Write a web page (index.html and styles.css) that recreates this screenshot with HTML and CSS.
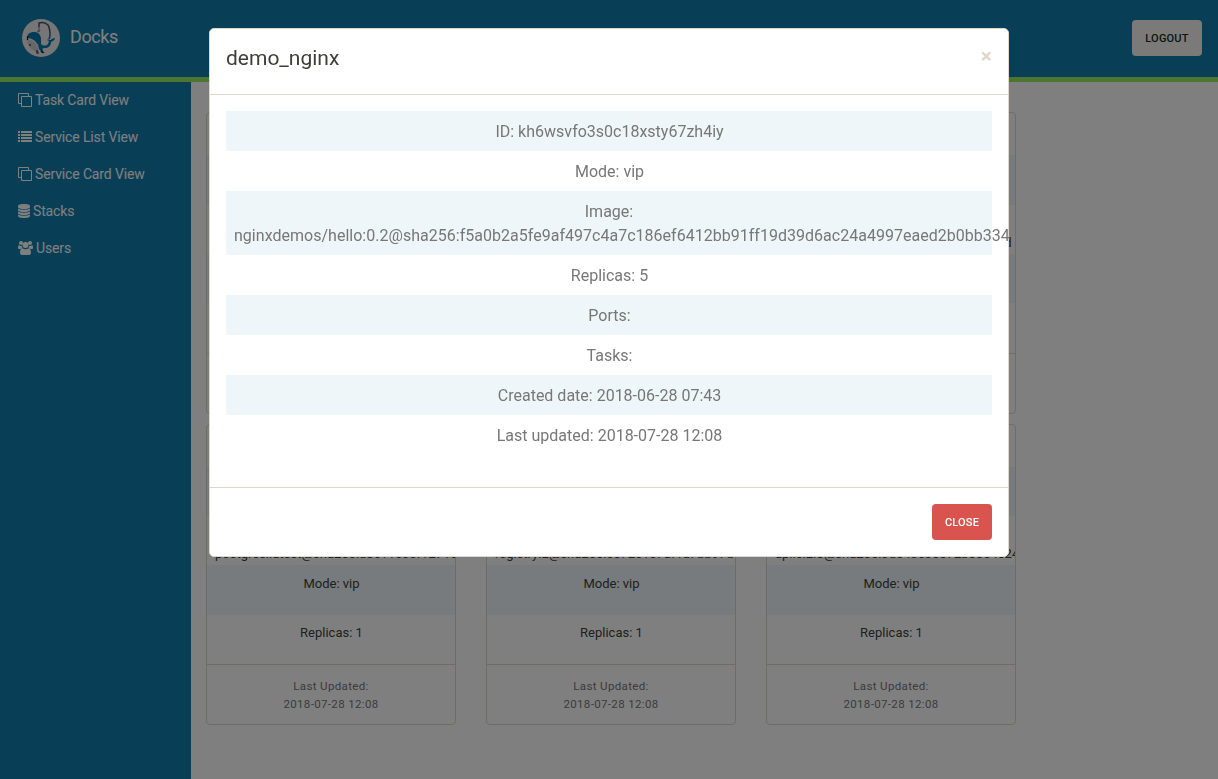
FILE: index.html
```
<!DOCTYPE html>
<html lang="en">
<head>
<meta charset="utf-8">
<title>Docks</title>
<link rel="stylesheet" href="styles.css">
</head>
<body>
<header class="navbar">
  <div class="brand">
    <svg class="logo" viewBox="0 0 38 38">
      <circle cx="19" cy="19" r="19" fill="#ececec"/>
      <path d="M5 21c3-1 7 1 9 4 2 3 3 6 3 8-6 0-11-5-12-12z" fill="#cfcfcf"/>
      <path d="M5 19c0-4 3-6 7-6s6 2 7 6v6c2 2 5 2 7 0l1-3-2-1c1-1 3 0 4 0 0-1 2-2 4-2 0 2-2 3-4 4 0 4-3 6-6 6-3 1-5 0-6-2l-4-5c-2-2-5-3-8-3z" fill="#0079ad"/>
      <path d="M16 26l4 2 1 4 2 2h-3l-2-3-1-1z" fill="#0079ad"/>
      <path d="M5.500 17v4M8 25v2M15 31v3h2M19 32l2 2" fill="none" stroke="#222" stroke-width="1.2"/>
      <path d="M17 8V4c4-1 7 0 9 2 2 3 2 7 2 11l-1 3" fill="none" stroke="#3b5582" stroke-width="1.5"/>
      <path d="M17 8v4M15 12l2 1 1-2" fill="none" stroke="#777d92" stroke-width="1"/>
    </svg>
    <span>Docks</span>
  </div>
  <button class="btn btn-light">Logout</button>
</header>
<div class="layout">
  <nav class="sidebar">
    <a><svg class="icon" viewBox="0 0 14 14"><path d="M3.5 10.500h-3v-10h10v3M3.500 3.500h10v10h-10z" fill="none" stroke="currentColor"/></svg><span>Task Card View</span></a>
    <a><svg class="icon" viewBox="0 0 14 14"><path d="M0 1h2v2H0zM3 1h11v2H3zM0 4h2v2H0zM3 4h11v2H3zM0 7h2v2H0zM3 7h11v2H3zM0 10h2v2H0zM3 10h11v2H3z" fill="currentColor"/></svg><span>Service List View</span></a>
    <a><svg class="icon" viewBox="0 0 14 14"><path d="M3.5 10.500h-3v-10h10v3M3.500 3.500h10v10h-10z" fill="none" stroke="currentColor"/></svg><span>Service Card View</span></a>
    <a><svg class="icon icon-stack" viewBox="0 0 12 14"><path d="M0 2c0-2.700 12-2.700 12 0v1c0 2.700-12 2.700-12 0zM0 4.600c2 1.600 10 1.600 12 0V6c0 2.700-12 2.700-12 0zM0 7.600c2 1.600 10 1.600 12 0V9c0 2.700-12 2.700-12 0zM0 10.600c2 1.600 10 1.600 12 0V12c0 2.700-12 2.700-12 0z" fill="currentColor"/></svg><span>Stacks</span></a>
    <a><svg class="icon icon-users" viewBox="0 0 15 14"><g fill="currentColor"><circle cx="3" cy="2" r="2"/><circle cx="12" cy="2" r="2"/><circle cx="7.5" cy="4" r="3"/><path d="M1 4.200c1 .8 2 .9 2.800.5 0 1 .3 1.700.8 2.300-.9 0-1.600.3-2.100 1H1.300C.4 8 0 7.400 0 6.700 0 5.300.3 4 1 4.200zM14 4.200c-1 .8-2 .9-2.800.5 0 1-.3 1.700-.8 2.300.9 0 1.600.3 2.100 1h1.200c.9 0 1.300-.6 1.300-1.300 0-1.400-.3-2.700-1-2.500zM4.500 7.200c1.900 1.500 4.100 1.500 6 0 1.700 0 2.500 2 2.500 4.600 0 1.400-.9 2.200-2.100 2.200H4.100C2.900 14 2 13.200 2 11.800c0-2.600.8-4.600 2.500-4.600z"/></g></svg><span>Users</span></a>
  </nav>
  <main class="cards">
    <section class="card">
      <h4 class="card-head">demo_redis</h4>
      <div class="row stripe">ID: q81xm2v07c</div>
      <div class="row">Image:<br>redis:latest@sha256:096cff9e6024603d</div>
      <div class="row stripe">Mode: vip</div>
      <div class="row">Replicas: 1</div>
      <footer class="card-foot">Last Updated:<br>2018-07-28 12:08</footer>
    </section>
    <section class="card">
      <h4 class="card-head">demo_nginx</h4>
      <div class="row stripe">ID: kh6wsvfo3s</div>
      <div class="row">Image:<br>nginxdemos/hello:0.2@sha256:f5a0b2a</div>
      <div class="row stripe">Mode: vip</div>
      <div class="row">Replicas: 5</div>
      <footer class="card-foot">Last Updated:<br>2018-07-28 12:08</footer>
    </section>
    <section class="card">
      <h4 class="card-head">demo_app</h4>
      <div class="row stripe">ID: z4n7t0pe5u</div>
      <div class="row">Image:<br>alpine:3.7@sha256:8c03bb07a531c530d</div>
      <div class="row stripe">Mode: vip</div>
      <div class="row">Replicas: 1</div>
      <footer class="card-foot">Last Updated:<br>2018-07-28 12:08</footer>
    </section>
    <section class="card">
      <h4 class="card-head">demo_db</h4>
      <div class="row stripe">ID: w2c9y6ha1r</div>
      <div class="row">Image:<br>postgres:latest@sha256:d8e11c36f12716c5</div>
      <div class="row stripe">Mode: vip</div>
      <div class="row">Replicas: 1</div>
      <footer class="card-foot">Last Updated:<br>2018-07-28 12:08</footer>
    </section>
    <section class="card">
      <h4 class="card-head">registry</h4>
      <div class="row stripe">ID: m5f3k8jd0s</div>
      <div class="row">Image:<br>registry:2@sha256:c672c107af1a7bb97d11</div>
      <div class="row stripe">Mode: vip</div>
      <div class="row">Replicas: 1</div>
      <footer class="card-foot">Last Updated:<br>2018-07-28 12:08</footer>
    </section>
    <section class="card">
      <h4 class="card-head">api</h4>
      <div class="row stripe">ID: b6g1o9li4x</div>
      <div class="row">Image:<br>aplic:2.8@sha256:3d543c36572b0564c24</div>
      <div class="row stripe">Mode: vip</div>
      <div class="row">Replicas: 1</div>
      <footer class="card-foot">Last Updated:<br>2018-07-28 12:08</footer>
    </section>
  </main>
</div>
<div class="backdrop">
  <div class="modal" role="dialog">
    <div class="modal-header"><h5 class="modal-title">demo_nginx</h5><span class="close">×</span></div>
    <div class="modal-body">
      <table class="details">
        <tr><td>ID: kh6wsvfo3s0c18xsty67zh4iy</td></tr>
        <tr><td>Mode: vip</td></tr>
        <tr><td class="image">Image: nginxdemos/hello:0.2@sha256:f5a0b2a5fe9af497c4a7c186ef6412bb91ff19d39d6ac24a4997eaed2b0bb334</td></tr>
        <tr><td>Replicas: 5</td></tr>
        <tr><td>Ports:</td></tr>
        <tr><td>Tasks:</td></tr>
        <tr><td>Created date: 2018-06-28 07:43</td></tr>
        <tr><td>Last updated: 2018-07-28 12:08</td></tr>
      </table>
    </div>
    <div class="modal-footer"><button class="btn btn-danger">Close</button></div>
  </div>
</div>
</body>
</html>
```
FILE: styles.css
```
* { box-sizing: border-box; }
body { margin: 0; height: 779px; overflow: hidden; background: #fff; font-family: Roboto, sans-serif; font-size: 14px; line-height: 1.5; color: #3e3f3a; display: flex; flex-direction: column; }

.navbar { height: 82px; flex: none; display: flex; justify-content: space-between; align-items: flex-start; padding: 19px 16px 0 22px; background: #107fae; border-bottom: 5px solid #96ec60; }
.brand { display: flex; align-items: center; gap: 10px; height: 38px; color: #fff; font-size: 18px; letter-spacing: -.4px; }
.brand span { padding-bottom: 3px; }
.logo { width: 38px; height: 38px; }
.btn { height: 36px; margin: 0; padding: 2px 0 0; border: 1px solid transparent; border-radius: 4px; font-family: inherit; font-size: 11px; font-weight: 500; line-height: 22px; letter-spacing: .2px; text-transform: uppercase; }
.btn-light { width: 70px; margin-top: 1px; background: #f8f5f0; color: #212529; }
.btn-danger { width: 60px; background: #d9534f; color: #fff; }

.layout { flex: 1; display: flex; min-height: 0; }
.sidebar { width: 191px; flex: none; background: #107fae; letter-spacing: -.14px; }
.sidebar a { display: flex; align-items: center; gap: 3px; height: 37px; padding-left: 18px; color: #fff; }
.icon { width: 14px; height: 14px; margin-bottom: 1px; }
.icon-stack { width: 12px; }
.icon-users { width: 15px; }

.cards { display: grid; grid-template-columns: repeat(3, 250px); gap: 10px 30px; padding: 30px 15px; align-content: start; }
.card { height: 301.5px; border: 1px solid #dfd7ca; border-radius: 4px; overflow: hidden; text-align: center; font-size: 13px; display: flex; flex-direction: column; color: #3e3f3a; }
.card-head { flex: 1; margin: 0; padding-top: 10px; font-size: 15px; font-weight: 400; }
.row { height: 49.3px; flex: none; padding: 8.5px 7px 0 8px; line-height: 19.5px; white-space: nowrap; }
.stripe { background: #eef6fa; }
.card-foot { height: 60px; flex: none; padding-top: 12px; border-top: 1px solid #dfd7ca; font-size: 11.5px; letter-spacing: .35px; line-height: 18px; color: #777; }

.backdrop { position: fixed; inset: 0; background: rgba(0, 0, 0, .5); display: flex; justify-content: center; align-items: flex-start; padding-top: 28px; }
.modal { width: 800px; background: #fff; border: 1px solid #dfd7ca; border-radius: 5px; }
.modal-header { height: 66px; display: flex; justify-content: space-between; padding: 14px 16px 0; border-bottom: 1px solid #dfd7ca; }
.modal-title { margin: 0; font-size: 21px; font-weight: 400; line-height: 30px; }
.close { font-size: 21px; font-weight: 700; line-height: 26px; color: #dfd7ca; }
.modal-body { padding: 16px; }
.details { width: 100%; margin-bottom: 16px; border-collapse: collapse; table-layout: fixed; font-size: 16px; line-height: 24px; text-align: center; color: #777; }
.details td { padding: 9px 7px 7px 8px; }
.details .image { padding-right: 8px; letter-spacing: .02px; }
.details tr:nth-child(odd) { background: #eef6fa; }
.modal-footer { height: 69px; padding: 16px; border-top: 1px solid #dfd7ca; display: flex; justify-content: flex-end; }
```
